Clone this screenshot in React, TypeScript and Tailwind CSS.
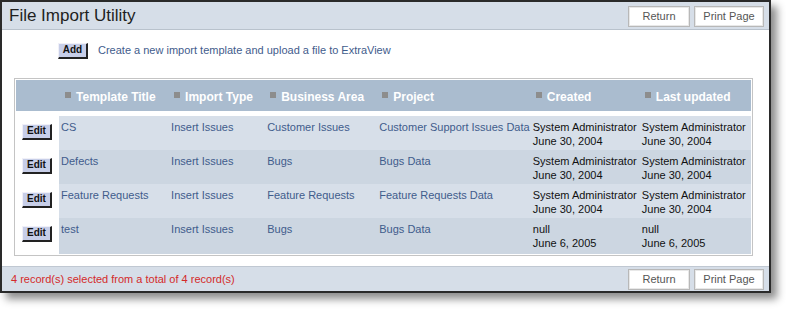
import React from "react"

const rows = [
  { title: "CS", type: "Insert Issues", area: "Customer Issues", project: "Customer Support Issues Data", createdBy: "System Administrator", created: "June 30, 2004", updatedBy: "System Administrator", updated: "June 30, 2004" },
  { title: "Defects", type: "Insert Issues", area: "Bugs", project: "Bugs Data", createdBy: "System Administrator", created: "June 30, 2004", updatedBy: "System Administrator", updated: "June 30, 2004" },
  { title: "Feature Requests", type: "Insert Issues", area: "Feature Requests", project: "Feature Requests Data", createdBy: "System Administrator", created: "June 30, 2004", updatedBy: "System Administrator", updated: "June 30, 2004" },
  { title: "test", type: "Insert Issues", area: "Bugs", project: "Bugs Data", createdBy: "null", created: "June 6, 2005", updatedBy: "null", updated: "June 6, 2005" },
]

const headers = ["Template Title", "Import Type", "Business Area", "Project", "Created", "Last updated"]
const widths = ["w-[109px]", "w-[96px]", "w-[112px]", "w-[153px]", "w-[109px]", "w-[112px]"]

function SmallButton({ label }: { label: string }) {
  return (
    <button className="w-[30px] h-[16px] bg-[#c7cee8] border border-t-[#f0f0f8] border-l-[#f0f0f8] border-r-[#222] border-b-[#222] border-r-2 border-b-2 text-[10px] font-bold text-[#111] leading-none">
      {label}
    </button>
  )
}

function PageButton({ label, w }: { label: string; w: string }) {
  return (
    <button className={`${w} h-[21px] bg-white border border-[#b8b8b8] outline outline-1 outline-[#e8e8e8] -outline-offset-2 text-[11px] text-[#555] leading-none`}>
      {label}
    </button>
  )
}

export default function App() {
  return (
    <div className="w-[786px] h-[316px] bg-white" style={{ fontFamily: "'Liberation Sans', Arial, sans-serif" }}>
      <div className="w-[771px] h-[293px] border-2 border-[#2a2a2a] bg-white flex flex-col shadow-[6px_6px_8px_rgba(0,0,0,0.45)]">
        {/* Title bar */}
        <div className="h-[28px] bg-[#d6dee8] border-b border-[#b9c2cc] flex items-center justify-between pl-[7px] pr-[5px]">
          <h1 className="text-[17px] text-[#1e1e1e] leading-none">File Import Utility</h1>
          <div className="flex gap-[4px] pt-[1px]">
            <PageButton label="Return" w="w-[62px]" />
            <PageButton label="Print Page" w="w-[70px]" />
          </div>
        </div>

        {/* Add row */}
        <div className="flex items-center gap-[10px] pl-[56px] pt-[13px] h-[28px]">
          <SmallButton label="Add" />
          <span className="text-[11px] text-[#3f5c8c]">Create a new import template and upload a file to ExtraView</span>
        </div>

        {/* Table */}
        <div className="ml-[12px] mt-[20px] w-[739px] border border-[#c4c4c4] p-[1px]">
          <table className="border-separate border-spacing-0 w-full">
            <thead>
              <tr className="bg-[#aabccf] h-[31px]">
                <th className="w-[43px]"></th>
                {headers.map((h, i) => (
                  <th key={h} className={`${widths[i]} text-left font-bold text-[12px] text-white pl-[6px]`}>
                    <span className="inline-flex items-center gap-[5px]">
                      <span className="inline-block w-[6px] h-[6px] bg-[#8d8d8d] mb-[3px]"></span>
                      {h}
                    </span>
                  </th>
                ))}
              </tr>
              <tr className="h-[5px]"><td colSpan={7}></td></tr>
            </thead>
            <tbody>
              {rows.map((r, i) => (
                <tr key={r.title} className={`h-[34px] align-top text-[11px] leading-[14px] ${i % 2 === 0 ? "bg-[#d7dfe9]" : "bg-[#ccd6e1]"}`}>
                  <td className="bg-white pt-[7px] pl-[6px]"><SmallButton label="Edit" /></td>
                  <td className="pl-[2px] pt-[4px] text-[#3f5c8c]">{r.title}</td>
                  <td className="pl-[3px] pt-[4px] text-[#3f5c8c]">{r.type}</td>
                  <td className="pl-[3px] pt-[4px] text-[#3f5c8c]">{r.area}</td>
                  <td className="pl-[3px] pt-[4px] text-[#3f5c8c] whitespace-nowrap">{r.project}</td>
                  <td className="pl-[3px] pt-[4px] text-[#111] whitespace-nowrap">{r.createdBy}<br />{r.created}</td>
                  <td className="pl-[3px] pt-[4px] text-[#111] whitespace-nowrap">{r.updatedBy}<br />{r.updated}</td>
                </tr>
              ))}
              <tr className="h-[2px] bg-[#ccd6e1]"><td className="bg-white"></td><td colSpan={6}></td></tr>
            </tbody>
          </table>
        </div>

        {/* Footer */}
        <div className="mt-auto h-[25px] bg-[#d6dee8] border-t border-[#c0c8d2] flex items-center justify-between pl-[9px] pr-[5px]">
          <span className="text-[11px] text-[#d42a2a]">4 record(s) selected from a total of 4 record(s)</span>
          <div className="flex gap-[4px]">
            <PageButton label="Return" w="w-[62px]" />
            <PageButton label="Print Page" w="w-[70px]" />
          </div>
        </div>
      </div>
    </div>
  )
}
